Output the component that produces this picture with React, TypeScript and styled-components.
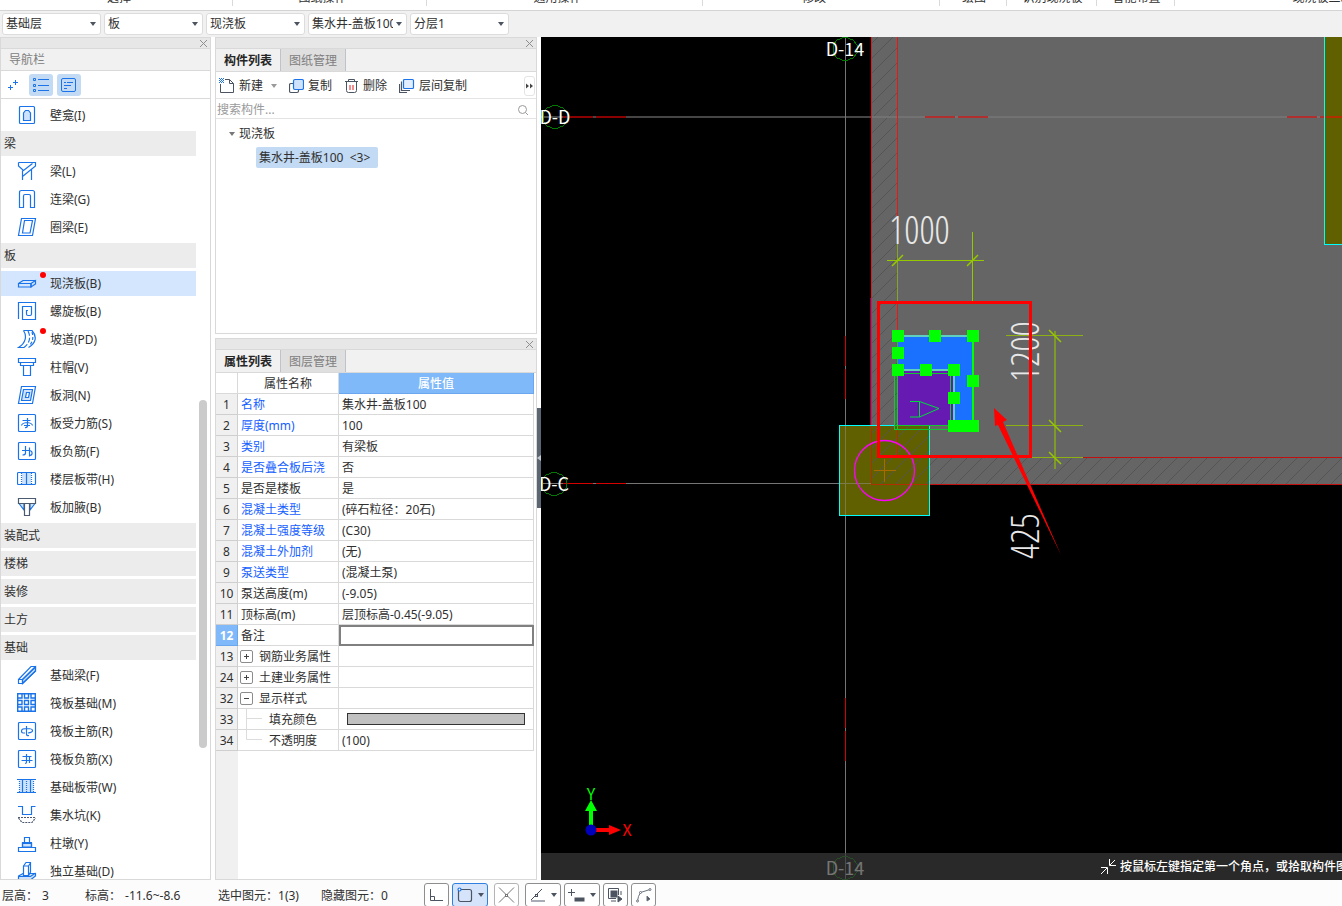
import React from "react";
import styled, { createGlobalStyle, css } from "styled-components";

const BLUE = "#1a73e8";
const PALE = "#cfe2fb";
const LINE = "#d9d9d9";

const Global = createGlobalStyle`
  * { box-sizing: border-box; }
  body {
    margin: 0;
    overflow: hidden;
    background: #fff;
    color: #303030;
    font: 12px/16px "Noto Sans", "Noto Sans CJK SC", sans-serif;
  }
  button, input, select {
    font: inherit;
    color: inherit;
    margin: 0;
    padding: 0;
    border: 0;
    background: none;
  }
  svg { display: block; flex: none; }
`;

const Page = styled.div`
  display: flex;
  flex-direction: column;
  height: 100vh;
`;

/* ---------- ribbon captions ---------- */
const Ribbon = styled.header`
  display: grid;
  grid-template-columns: 233px 194px 276px 237px 67px 90px 78px minmax(320px, 1fr);
  height: 11px;
  flex: none;
  overflow: hidden;
  border-bottom: 1px solid #d4d4d4;
`;

const RibbonGroup = styled.div<{ $lead?: number; $trail?: number }>`
  display: flex;
  justify-content: center;
  align-items: flex-end;
  height: 6px;
  padding: 0 ${(p) => p.$trail ?? 0}px 0 ${(p) => p.$lead ?? 0}px;
  border-right: 1px solid ${LINE};
  white-space: nowrap;
`;

/* ---------- selector bar ---------- */
const SelectorBar = styled.div`
  display: flex;
  gap: 3px;
  flex: none;
  height: 26px;
  padding: 2px;
  background: #f1f1f1;
`;

const SelectBox = styled.div`
  position: relative;
  width: 99px;
  height: 22px;
`;

const Select = styled.select`
  appearance: none;
  width: 100%;
  height: 100%;
  padding: 0 13px 0 3px;
  border: 1px solid #dcdcdc;
  border-radius: 3px;
  background: #fff;
  overflow: hidden;
`;

const Caret = styled.i<{ $over?: boolean; $color?: string }>`
  border: 3px solid transparent;
  border-top: 4px solid ${(p) => p.$color ?? "#4c5461"};
  border-bottom: 0;
  ${(p) =>
    p.$over &&
    css`
      position: absolute;
      right: 5px;
      top: 9px;
      pointer-events: none;
    `}
`;

/* ---------- main area ---------- */
const Main = styled.main`
  display: grid;
  grid-template-columns: 211px 322px minmax(0, 1fr);
  column-gap: 4px;
  flex: 1;
  min-height: 0;
`;

const Panel = styled.section`
  display: flex;
  flex-direction: column;
  min-height: 0;
  border: 1px solid ${LINE};
  background: #fff;
`;

const Grip = styled.div`
  display: flex;
  justify-content: flex-end;
  align-items: center;
  flex: none;
  height: 11px;
  padding-right: 2px;
  background: #e7e7e7;
  border-bottom: 1px solid ${LINE};
`;

const PanelTitle = styled.h2`
  flex: none;
  height: 22px;
  margin: 0;
  padding: 2px 8px;
  font-size: 12px;
  line-height: 18px;
  font-weight: 400;
  color: #808080;
  background: #f1f1f1;
  border-bottom: 1px solid ${LINE};
`;

const NavTools = styled.div`
  display: flex;
  align-items: center;
  gap: 4px;
  flex: none;
  height: 28px;
  border-bottom: 1px solid ${LINE};
`;

const NavTool = styled.button<{ $on?: boolean }>`
  display: grid;
  place-items: center;
  width: 24px;
  height: 22px;
  border-radius: 3px;
  background: ${(p) => (p.$on ? "#c2daf4" : "transparent")};
`;

const NavBody = styled.div`
  display: grid;
  grid-template-columns: minmax(0, 1fr) 8px;
  column-gap: 3px;
  flex: 1;
  min-height: 0;
  padding-right: 3px;
`;

const NavList = styled.nav`
  display: flex;
  flex-direction: column;
  gap: 3px;
  overflow: hidden;
  padding-top: 4px;
`;

const NavGroup = styled.button`
  flex: none;
  height: 25px;
  padding-left: 3px;
  text-align: left;
  background: #ececec;
`;

const NavItem = styled.button<{ $on?: boolean }>`
  display: flex;
  align-items: center;
  gap: 13px;
  flex: none;
  height: 25px;
  padding-left: 16px;
  background: ${(p) => (p.$on ? "#d3e6fe" : "transparent")};
`;

const IconHolder = styled.span`
  position: relative;
`;

const Dot = styled.i`
  position: absolute;
  left: 23px;
  top: -1px;
  width: 6px;
  height: 6px;
  border-radius: 50%;
  background: #f00;
`;

const Track = styled.div`
  display: grid;
  grid-template-rows: 301fr 349fr 131fr;
`;

const Thumb = styled.div`
  grid-row: 2;
  border-radius: 4px;
  background: #cbcbcb;
`;

const Middle = styled.div`
  display: grid;
  grid-template-rows: 297px minmax(0, 1fr);
  row-gap: 4px;
  min-height: 0;
`;

const Tabs = styled.div`
  display: flex;
  flex: none;
  height: 23px;
  background: #f1f1f1;
  border-bottom: 1px solid ${LINE};
`;

const Tab = styled.button<{ $on?: boolean }>`
  width: 65px;
  padding-top: 1px;
  border-right: 1px solid #bfc3c9;
  font-weight: ${(p) => (p.$on ? 700 : 400)};
  color: ${(p) => (p.$on ? "#262626" : "#808080")};
  background: ${(p) => (p.$on ? "#f1f1f1" : "#dfdfdf")};
`;

const Commands = styled.div`
  display: flex;
  align-items: center;
  gap: 12px;
  flex: none;
  height: 27px;
  padding: 2px 0 0 3px;
  border-bottom: 1px solid #e4e4e4;
`;

const Command = styled.button`
  display: flex;
  align-items: center;
  gap: 4px;
  white-space: nowrap;
  ${Caret} { margin-left: 4px; }
`;

const More = styled.button`
  display: grid;
  place-items: center;
  width: 11px;
  height: 20px;
  margin: 0 1px 0 auto;
  border: 1px solid #e4e4e4;
  border-radius: 3px;
`;

const Search = styled.label`
  display: flex;
  align-items: center;
  flex: none;
  height: 20px;
  padding: 2px 7px 0 1px;
  border-bottom: 1px solid #e4e4e4;
`;

const SearchInput = styled.input`
  flex: 1;
  min-width: 0;
  outline: 0;
  &::placeholder { color: #9a9a9a; opacity: 1; }
`;

const Tree = styled.ul`
  margin: 0;
  padding: 4px 0 0 13px;
  list-style: none;
`;

const TreeNode = styled.li`
  display: flex;
  align-items: center;
  gap: 4px;
  height: 21px;
  margin-bottom: 3px;
`;

const TreeLeaf = styled.button`
  height: 21px;
  margin-left: 27px;
  padding: 0 8px 0 3px;
  border-radius: 2px;
  background: #c2daf4;
  white-space: pre;
`;

/* ---------- property table ---------- */
const TableArea = styled.div`
  flex: 1;
  min-height: 0;
  overflow: hidden;
  padding-right: 2px;
  background: linear-gradient(to right, #f0f0f0 22px, #fff 22px);
`;

const Table = styled.table`
  width: 100%;
  table-layout: fixed;
  border-collapse: separate;
  border-spacing: 0;
  background: #fff;
`;

const cell = css`
  height: 21px;
  padding: 2px 0 0;
  border-right: 1px solid #d9d9d9;
  border-bottom: 1px solid #d9d9d9;
  font-weight: 400;
  line-height: 18px;
  white-space: nowrap;
`;

const Head = styled.th<{ $on?: boolean }>`
  ${cell}
  ${(p) =>
    p.$on &&
    css`
      color: #fff;
      font-weight: 500;
      background: #80b9f9;
      border-color: #6aa7ee;
    `}
`;

const Num = styled.th<{ $on?: boolean }>`
  ${cell}
  background: ${(p) => (p.$on ? "#80b9f9" : "#f0f0f0")};
  color: ${(p) => (p.$on ? "#fff" : "inherit")};
  font-weight: ${(p) => (p.$on ? 700 : 400)};
  border-color: ${(p) => (p.$on ? "#6aa7ee" : "#cfcfcf")};
`;

const Name = styled.td<{ $link?: boolean }>`
  ${cell}
  padding: 0;
  color: ${(p) => (p.$link ? "#1560ff" : "inherit")};
`;

const NameLine = styled.div<{ $tree?: boolean }>`
  display: flex;
  align-items: center;
  gap: 6px;
  height: 20px;
  padding-left: ${(p) => (p.$tree ? "2px" : "3px")};
`;

const NameText = styled.span`
  padding-top: 2px;
`;

const Value = styled.td<{ $bare?: boolean }>`
  ${cell}
  padding: ${(p) => (p.$bare ? "0" : "2px")} 0 0 3px;
`;

const ValueEdit = styled.td`
  ${cell}
  padding: 0;
  border: 0;
`;

const NoteInput = styled.input`
  display: block;
  width: 100%;
  height: 21px;
  padding: 0 2px;
  border: 2px solid #808080;
  background: #fff;
  outline: 0;
`;

const Expander = styled.button`
  display: grid;
  place-items: center;
  width: 13px;
  height: 13px;
  border: 1px solid #8c8c8c;
  border-radius: 2px;
  background: #fff;
`;

const Swatch = styled.button`
  display: block;
  width: 178px;
  height: 12px;
  margin-left: 5px;
  border: 1px solid #333;
  background: #c0c0c0;
`;

/* ---------- drawing area ---------- */
const Stage = styled.section`
  position: relative;
  display: flex;
  flex-direction: column;
  justify-content: flex-end;
  min-height: 0;
  background: #000;
`;

const Drawing = styled.svg`
  position: absolute;
  inset: 0;
  width: 100%;
  height: 100%;
`;

const SplitHandle = styled.button`
  position: absolute;
  left: -4px;
  top: 44%;
  display: grid;
  place-items: center;
  width: 4px;
  height: 100px;
  background: #5b6672;
`;

const HintBar = styled.div`
  position: relative;
  display: flex;
  justify-content: flex-end;
  height: 27px;
  background: rgba(58, 58, 58, 0.7);
`;

const Hint = styled.p`
  display: flex;
  align-items: center;
  gap: 4px;
  width: 242px;
  margin: 0;
  overflow: hidden;
  color: #fff;
  font-weight: 500;
  white-space: nowrap;
`;

/* ---------- status bar ---------- */
const Status = styled.footer`
  display: flex;
  flex: none;
  height: 26px;
  overflow: hidden;
  background: #fcfcfc;
`;

const Facts = styled.dl`
  display: grid;
  grid-template-columns: 83px 133px 103px 103px;
  margin: 0;
  padding: 8px 0 0 2px;
`;

const Fact = styled.div<{ $spaced?: boolean }>`
  display: flex;
  gap: ${(p) => (p.$spaced ? "4px" : "0")};
  white-space: nowrap;
  dd { margin: 0; }
`;

const Modes = styled.div`
  display: flex;
  gap: 3px;
  padding-top: 3px;
`;

const Mode = styled.button<{ $on?: boolean; $off?: boolean; $wide?: boolean }>`
  display: flex;
  align-items: center;
  justify-content: center;
  gap: 5px;
  width: ${(p) => (p.$wide ? "36px" : "25px")};
  height: 24px;
  margin: ${(p) => (p.$off ? "0 3px" : "0")};
  border: 1px solid ${(p) => (p.$on ? "#2f80e0" : p.$off ? "#b4b4b4" : "#8e8e8e")};
  border-radius: 3px;
  background: ${(p) => (p.$on ? "#d5e4fb" : "#fff")};
`;

/* ---------- icons ---------- */
const CloseX = () => (
  <svg width="9" height="9" viewBox="0 0 9 9" stroke="#8f8f8f" fill="none">
    <path d="M1 1L8 8M8 1L1 8" />
  </svg>
);

const frame = <rect x="1.5" y="1.5" width="17" height="17" rx="1" />;

const shapes: Record<string, React.ReactNode> = {
  niche: (
    <>
      <rect x="2.5" y="1.5" width="15" height="17" rx="1" />
      <path d="M6.5 15.5V8L8.5 5.5H11.5L13.5 8V15.5z" fill={PALE} />
    </>
  ),
  beam: <path d="M1.5 1.5H18.5V5L5.5 15.5M1.5 1.5V5L6.5 9.5L15.5 2.5M5.5 9.5V19M14.5 8.5V19" />,
  link: <path d="M2.5 18.5V3.5Q2.5 1.5 4.5 1.5H15.5Q17.5 1.5 17.5 3.5V18.5H13.5V7Q13.5 5.5 12 5.5H8Q6.5 5.5 6.5 7V18.5z" />,
  ring: <path d="M4.5 1.5H18.5L15.5 18.5H1.5zM7.5 3.5H15.5L13 16H5.5z" />,
  slab: (
    <>
      <path d="M14 10.5L18.5 7.5V11L14 14z" fill={PALE} />
      <path d="M1.5 10.5L6 7.5H18.5M1.5 10.5H14V14H1.5z" />
    </>
  ),
  spiral: <path d="M1.5 18V1.5H18.5V18.5H5.5V5.5H14.5V13Q14.5 14.5 13 14.5H11Q9.5 14.5 9.5 13V9.5H11" />,
  ramp: (
    <>
      <path d="M6.5 1.5H15C20 7 19.5 14 11.5 18.5M6.5 1.5C10 7 9 14 1.5 18.5H7" />
      <path d="M11 2C14 8 13 14 7 18.5" strokeDasharray="5 2" />
      <path d="M15 3C16.500 8 16 12 13 16" strokeDasharray="3 2" />
    </>
  ),
  cap: <path d="M1.5 1.5H18.5V5.5H1.5zM3.5 5.5V8.5H16.5V5.5M6.5 8.5V18.5H13.5V8.5" />,
  hole: (
    <>
      <path d="M4.5 1.5H18.5L15.5 18.5H1.5z" />
      <path d="M6.5 4.5H15.5L13.5 15.5H4.5z" fill={PALE} />
      <path d="M9.5 7.5H12.5L11.5 12.5H8.5z" fill="#fff" />
    </>
  ),
  barS: (
    <>
      {frame}
      <path d="M5.5 7.5H13.5M4.5 12.5Q5 10 10 9.5Q15 10 15.5 12.5M10.500 5V13Q10 15 8 14.5M7 12.5H13" />
    </>
  ),
  barF: (
    <>
      {frame}
      <path d="M5 9.500H12.5Q15.5 10 15 13Q14.500 14.500 12.500 14.500M8.5 5V12Q8.5 14 5.5 14M12.5 6.5V15.500" />
    </>
  ),
  stripH: (
    <>
      <rect x="5" y="3.5" width="9" height="12" fill={PALE} stroke="none" />
      <rect x="0.5" y="3.5" width="18" height="12" rx="1" />
      <path d="M9.5 3.5V15.5" />
      <path d="M4.5 4V15M14.5 4V15" strokeDasharray="1 1" />
    </>
  ),
  haunch: (
    <>
      <path d="M2 6.5L7 13V6.5zM18 6.5L13 13V6.5z" fill={PALE} />
      <path d="M1.5 1.5H18.5V6.5H1.5zM7.5 6.5V18.5H12.5V6.5" stroke="#4c5a70" />
    </>
  ),
  fbeam: (
    <>
      <path d="M5.5 14.5L18.5 2V6L5.5 18.5z" fill={PALE} />
      <path d="M1.5 14.5H5.5V18.5H1.5zM1.5 14.5L14 1.5H18.5V6L5.5 18.5M5.5 14.5L18.5 1.5" />
    </>
  ),
  raft: (
    <g strokeWidth="1.4">
      <path d="M0.700 0.700H18.300V18.300H0.700z" />
      <path d="M0.700 5H5V0.700M7.500 0.700V5H11.500V0.700M14 0.700V5H18.300M0.700 7.500H5V11.500H0.700M7.500 7.500H11.500V11.500H7.500zM18.300 7.500H14V11.500H18.300M0.700 14H5V18.300M7.500 18.300V14H11.500V18.300M14 18.300V14H18.300" />
    </g>
  ),
  barR: (
    <>
      {frame}
      <path d="M8 12H6Q4.500 12 4.500 10Q4.500 7.500 10 7.500Q15.500 7.500 15.500 9.500Q15.500 11.500 11 12M9.500 5V13Q9.500 15 12 14.500" />
    </>
  ),
  barX: (
    <>
      {frame}
      <path d="M5.5 7.5H14.5M4.5 11.5H15.5M9.5 5V13Q9.5 14.500 8 14.500M12.5 7.5V14" />
    </>
  ),
  stripW: (
    <>
      <rect x="2.5" y="3" width="14" height="12" fill={PALE} stroke="none" />
      <path d="M0 2.5H19M0 15.5H19M5.5 3V15M13.5 3V15" />
      <path d="M2.5 4V15M9.5 4V15M16.5 4V15" strokeDasharray="1 1" />
    </>
  ),
  sump: (
    <>
      <path d="M1 1.5H5.5V9.5H14.5V1.5H18.5" />
      <path d="M1 12.5H19M1.5 13L5 17.5H15L18.5 13" stroke="#4c5a70" strokeDasharray="2 1" />
    </>
  ),
  pier: (
    <>
      <path d="M5.5 10.5H14.5V14H5.5z" fill={PALE} />
      <path d="M7.5 9.5V4.5H12.5V9.500M5.5 14V9.5H14.5V14M1.5 14.5H18.5V18.5H1.5z" />
    </>
  ),
  single: (
    <>
      <path d="M1.5 15L6 12.5H18.5V15L14 18.5H1.5z" fill={PALE} />
      <path d="M6.500 5L9 1.500H13.500V11L11.500 14.500H6.500z" fill="#fff" />
      <path d="M1.5 15.5H13.5L18.5 12M6.5 5H11.5V14.5M11.5 5L13.5 2" />
    </>
  ),
};

const NavIcon = ({ name }: { name: string }) => (
  <svg width="20" height="21" viewBox="0 0 20 21" fill="none" stroke={BLUE} strokeWidth="1.2">
    {shapes[name]}
  </svg>
);

type Entry = { text: string; icon?: string; dot?: boolean; on?: boolean };

const entries: Entry[] = [
  { text: "壁龛(I)", icon: "niche" },
  { text: "梁" },
  { text: "梁(L)", icon: "beam" },
  { text: "连梁(G)", icon: "link" },
  { text: "圈梁(E)", icon: "ring" },
  { text: "板" },
  { text: "现浇板(B)", icon: "slab", dot: true, on: true },
  { text: "螺旋板(B)", icon: "spiral" },
  { text: "坡道(PD)", icon: "ramp", dot: true },
  { text: "柱帽(V)", icon: "cap" },
  { text: "板洞(N)", icon: "hole" },
  { text: "板受力筋(S)", icon: "barS" },
  { text: "板负筋(F)", icon: "barF" },
  { text: "楼层板带(H)", icon: "stripH" },
  { text: "板加腋(B)", icon: "haunch" },
  { text: "装配式" },
  { text: "楼梯" },
  { text: "装修" },
  { text: "土方" },
  { text: "基础" },
  { text: "基础梁(F)", icon: "fbeam" },
  { text: "筏板基础(M)", icon: "raft" },
  { text: "筏板主筋(R)", icon: "barR" },
  { text: "筏板负筋(X)", icon: "barX" },
  { text: "基础板带(W)", icon: "stripW" },
  { text: "集水坑(K)", icon: "sump" },
  { text: "柱墩(Y)", icon: "pier" },
  { text: "独立基础(D)", icon: "single" },
];

type Row = {
  n: number;
  name: string;
  value?: string;
  link?: boolean;
  kind?: "open" | "closed" | "child" | "last" | "note";
  swatch?: boolean;
};

const rows: Row[] = [
  { n: 1, name: "名称", value: "集水井-盖板100", link: true },
  { n: 2, name: "厚度(mm)", value: "100", link: true },
  { n: 3, name: "类别", value: "有梁板", link: true },
  { n: 4, name: "是否叠合板后浇", value: "否", link: true },
  { n: 5, name: "是否是楼板", value: "是" },
  { n: 6, name: "混凝土类型", value: "(碎石粒径：20石)", link: true },
  { n: 7, name: "混凝土强度等级", value: "(C30)", link: true },
  { n: 8, name: "混凝土外加剂", value: "(无)", link: true },
  { n: 9, name: "泵送类型", value: "(混凝土泵)", link: true },
  { n: 10, name: "泵送高度(m)", value: "(-9.05)" },
  { n: 11, name: "顶标高(m)", value: "层顶标高-0.45(-9.05)" },
  { n: 12, name: "备注", kind: "note" },
  { n: 13, name: "钢筋业务属性", kind: "closed" },
  { n: 24, name: "土建业务属性", kind: "closed" },
  { n: 32, name: "显示样式", kind: "open" },
  { n: 33, name: "填充颜色", kind: "child", swatch: true },
  { n: 34, name: "不透明度", kind: "last", value: "(100)" },
];

const PropertyName = ({ row }: { row: Row }) => {
  const branch = row.kind === "open" || row.kind === "closed";
  const leaf = row.kind === "child" || row.kind === "last";
  return (
    <NameLine $tree={branch || leaf}>
      {branch && (
        <Expander aria-label={row.name}>
          <svg width="7" height="7" viewBox="0 0 7 7" stroke="#444">
            <path d={row.kind === "open" ? "M1 3.5H6" : "M1 3.5H6M3.5 1V6"} />
          </svg>
        </Expander>
      )}
      {leaf && (
        <svg width="23" height="20" viewBox="0 0 23 20" fill="none" stroke="#dcdcdc">
          <path d={row.kind === "child" ? "M6.5 0V20M6.5 9.5H22" : "M6.5 0V9.5H22"} />
        </svg>
      )}
      <NameText>{row.name}</NameText>
    </NameLine>
  );
};

const Bubble = ({ x, y, label }: { x: number; y: number; label: string }) => (
  <g>
    <polygon
      points="0,-12 8,-9 12,-4 12,4 8,9 0,12 -8,9 -12,4 -12,-4 -8,-9"
      transform={`translate(${x} ${y})`}
      fill="none"
      stroke="#007a00"
    />
    <text x={x} y={y + 7} textAnchor="middle" fill="#fff" fontSize="18" fontFamily='"Noto Sans CJK SC", sans-serif'>
      {label}
    </text>
  </g>
);

const grips = [
  [898, 336], [935, 336], [973, 336], [898, 353], [898, 370],
  [926, 370], [954, 370], [973, 381], [954, 398],
];

const Plan = () => (
  <Drawing aria-label="平面图">
    <defs>
      <pattern id="hatch" width="15" height="15" patternUnits="userSpaceOnUse">
        <path d="M-1 16L16 -1" stroke="#555" />
      </pattern>
    </defs>
    <g transform="translate(-541 -37)" shapeRendering="crispEdges" fill="none">
      <path d="M541 117H4000" stroke="#454545" strokeWidth="2" />
      <path d="M541 483.5H4000M845.5 37V4000" stroke="#757575" />
      <rect x="871" y="37" width="4000" height="447" fill="#656565" />
      <path d="M871 37H898V458H4000V484H871z" fill="url(#hatch)" />
      <path d="M871 117H4000" stroke="#727272" strokeWidth="2" />
      <path d="M563 117H593M596 117H626" stroke="#8b0000" strokeWidth="2" />
      <path d="M925 117H955M958 117H988M1287 117H1317M1320 117H1350" stroke="#b03030" strokeWidth="2" />
      <path d="M563 483.5H593M596 483.5H626M845.5 336V366M845.5 369V399M845.5 698V728M845.5 731V761" stroke="#d40000" />
      <path d="M871.5 37V484M897.5 37V458" stroke="#f01414" />
      <path d="M871 484.5H4000M1083 457.5H4000" stroke="#c01010" />
      <path d="M870.5 298V425.5H860" stroke="#4a1a86" />

      <rect x="1324.5" y="20" width="90" height="224" fill="#606000" stroke="#00ffff" />
      <path d="M1325 117H1415" stroke="#b03000" strokeWidth="2" />

      <rect x="839.5" y="425.5" width="90" height="90" fill="#606000" />
      <path d="M871 426H929V484H871z" fill="url(#hatch)" />
      <path d="M840 483.5H871M845.5 426V515" stroke="#7a7a4a" />
      <path d="M871.5 426V484.5H929M897.5 426V458" stroke="#b03000" />
      <path d="M874 470.5H896M884.5 459V482" stroke="#a86a00" />
      <rect x="839.5" y="425.5" width="90" height="90" stroke="#00ffff" />
      <circle cx="884.5" cy="470.5" r="30" stroke="#ff00ff" strokeWidth="1.3" shapeRendering="auto" />

      <path d="M887 260.5H984M972.5 232V301" stroke="#96c800" />
      <path d="M897.5 232V301" stroke="#86a428" />
      <path d="M892 266L903 255M967 266L978 255" stroke="#96c800" strokeWidth="1.5" shapeRendering="auto" />
      <path d="M1055 331V469" stroke="#7f9a28" strokeWidth="2" />
      <path d="M1006 335.5H1083M1006 425.5H1083M1031 457.5H1083" stroke="#8cb014" />
      <path d="M1049 330L1061 342M1049 420L1061 432M1049 452L1061 464" stroke="#96c800" strokeWidth="1.5" shapeRendering="auto" />

      <rect x="898" y="336" width="74" height="90" fill="#1a70ff" />
      <rect x="898" y="371" width="55" height="54" fill="#661ab2" />
      <path d="M898 336H973M898 370H954V425" stroke="#5fd0c0" strokeWidth="2" />
      <path d="M973 336V426" stroke="#00ff00" strokeWidth="2" />
      <path d="M894.5 370V429.5H950M897.5 336V429M897 373.5H950.5V425.5H894" stroke="#12c832" />
      <path d="M910 401.5H919.5V417H910M919.5 401.5L939 408.5L919.5 417" stroke="#00dc3c" shapeRendering="auto" />
      {grips.map(([x, y]) => (
        <rect key={`${x}-${y}`} x={x - 6} y={y - 6} width="12" height="12" fill="#00ff00" />
      ))}
      <rect x="948" y="420" width="31" height="12" fill="#00ff00" />

      <g
        fill="#e8e8e8"
        fontSize="38"
        fontWeight="300"
        fontFamily='"Open Sans Condensed Light", "Open Sans Condensed", "Roboto Condensed", "Liberation Sans Narrow", sans-serif'
      >
        <text x="889" y="244">1000</text>
        <text transform="translate(1039 382) rotate(-90)">1200</text>
        <text transform="translate(1039 559) rotate(-90)">425</text>
      </g>

      <Bubble x={845} y={49} label="D-14" />
      <Bubble x={555} y={117} label="D-D" />
      <Bubble x={554} y={484} label="D-C" />
      <Bubble x={845} y={868} label="D-14" />

      <rect x="878.5" y="302.5" width="152" height="154" stroke="#f00" strokeWidth="3" />
      <path d="M994 408L1007 420L1003 422L1061 555L998 425L995 426z" fill="#f00" shapeRendering="auto" />

      <g shapeRendering="auto" fontSize="16" fontFamily='"Noto Sans CJK SC", sans-serif' textAnchor="middle">
        <path d="M589 826V811H585L591 800L597 811H593V826z" fill="#0f0" />
        <path d="M595 828H609V825L621 830L609 835V832H595z" fill="#f00" />
        <circle cx="591" cy="830" r="5.5" fill="#00b" />
        <text x="591" y="800" fill="#0f0">Y</text>
        <text x="627" y="836" fill="#f00">X</text>
      </g>
    </g>
  </Drawing>
);

const ribbon = [
  { label: "选择", lead: 6 },
  { label: "图纸操作", trail: 14 },
  { label: "通用操作", trail: 14 },
  { label: "修改", trail: 14 },
  { label: "绘图", lead: 2 },
  { label: "识别现浇板", lead: 2 },
  { label: "智能布置", lead: 2 },
  { label: "现浇板二次编辑" },
];

const selectors = [
  ["楼层", "基础层"], ["构件分类", "板"], ["构件类型", "现浇板"], ["构件", "集水井-盖板100"], ["分层", "分层1"],
];

export default function App() {
  return (
    <Page>
      <Global />
      <Ribbon>
        {ribbon.map((g) => (
          <RibbonGroup key={g.label} $lead={g.lead} $trail={g.trail}>{g.label}</RibbonGroup>
        ))}
      </Ribbon>
      <SelectorBar>
        {selectors.map(([label, value]) => (
          <SelectBox key={label}>
            <Select aria-label={label} defaultValue={value}>
              <option>{value}</option>
            </Select>
            <Caret $over />
          </SelectBox>
        ))}
      </SelectorBar>

      <Main>
        <Panel>
          <Grip><CloseX /></Grip>
          <PanelTitle>导航栏</PanelTitle>
          <NavTools>
            <NavTool aria-label="添加">
              <svg width="12" height="14" viewBox="0 0 12 14" stroke={BLUE} fill="none">
                <path d="M1 9.5H6M3.5 7V12M6 4.5H11M8.5 2V7" />
              </svg>
            </NavTool>
            <NavTool $on aria-label="列表">
              <svg width="16" height="16" viewBox="0 0 16 16" stroke={BLUE} fill="none">
                <path d="M5 2.5H16M5 8.5H16M5 13.5H16M0.5 1.5H2.5V3.5H0.5zM0.5 7.5H2.5V9.5H0.5zM0.5 12.5H2.5V14.5H0.5z" />
              </svg>
            </NavTool>
            <NavTool $on aria-label="详情">
              <svg width="16" height="16" viewBox="0 0 16 16" stroke={BLUE} fill="none">
                <rect x="0.5" y="1.5" width="14" height="13" rx="1.5" />
                <path d="M3 5.5H5M6 5.5H12M3 8.5H10M3 11.5H6" />
              </svg>
            </NavTool>
          </NavTools>
          <NavBody>
            <NavList>
              {entries.map((e) =>
                e.icon ? (
                  <NavItem key={e.text} $on={e.on}>
                    <IconHolder>
                      <NavIcon name={e.icon} />
                      {e.dot && <Dot />}
                    </IconHolder>
                    {e.text}
                  </NavItem>
                ) : (
                  <NavGroup key={e.text}>{e.text}</NavGroup>
                )
              )}
            </NavList>
            <Track><Thumb /></Track>
          </NavBody>
        </Panel>

        <Middle>
          <Panel>
            <Grip><CloseX /></Grip>
            <Tabs>
              <Tab $on>构件列表</Tab>
              <Tab>图纸管理</Tab>
            </Tabs>
            <Commands>
              <Command>
                <svg width="16" height="16" viewBox="0 0 16 16" fill="none" stroke="#4c5461">
                  <path d="M6 1.5H10.5L14.5 5.5V14.5H1.5V6M10.5 1.5V5.5H14.5" />
                  <path d="M0 0.5H5M0 2.5H5M0 4.5H5M1 1.5H5M1 3.5H5" stroke={BLUE} strokeDasharray="1 1" />
                </svg>
                新建
                <Caret $color="#9a9a9a" />
              </Command>
              <Command>
                <svg width="15" height="16" viewBox="0 0 15 16" strokeWidth="1.2">
                  <rect x="0.5" y="5.5" width="9" height="9" rx="1.5" fill="#fff" stroke="#4c5461" />
                  <rect x="4.5" y="1.5" width="10" height="10" rx="1.5" fill={PALE} stroke={BLUE} />
                </svg>
                复制
              </Command>
              <Command>
                <svg width="15" height="16" viewBox="0 0 15 16" fill="none" stroke="#4c5461">
                  <path d="M1 3.5H14M4.5 3.5V1.5H10.5V3.5M2.5 3.5V12.5Q2.5 14.5 4.5 14.5H10.5Q12.5 14.5 12.5 12.5V3.5" />
                  <path d="M6 7V12M9 7V12" stroke="#e02020" />
                </svg>
                删除
              </Command>
              <Command>
                <svg width="16" height="16" viewBox="0 0 16 16" fill="none" strokeWidth="1.2">
                  <path d="M2.5 3.5V12.5H11M0.5 6V14.5H8" stroke="#4c5461" />
                  <rect x="4.5" y="1.5" width="10" height="9" rx="1" fill="#e2eefd" stroke={BLUE} />
                </svg>
                层间复制
              </Command>
              <More aria-label="更多">
                <svg width="7" height="6" viewBox="0 0 7 6" fill="#444">
                  <path d="M0 0.5L3 3L0 5.5zM4 0.5L7 3L4 5.5z" />
                </svg>
              </More>
            </Commands>
            <Search>
              <SearchInput aria-label="搜索构件" placeholder="搜索构件..." />
              <svg width="12" height="12" viewBox="0 0 12 12" fill="none" stroke="#9a9a9a">
                <circle cx="5.5" cy="5.5" r="4" />
                <path d="M8.5 8.5L11 11" />
              </svg>
            </Search>
            <Tree>
              <TreeNode><Caret $color="#777" />现浇板</TreeNode>
              <TreeNode><TreeLeaf>集水井-盖板100  &lt;3&gt;</TreeLeaf></TreeNode>
            </Tree>
          </Panel>

          <Panel>
            <Grip><CloseX /></Grip>
            <Tabs>
              <Tab $on>属性列表</Tab>
              <Tab>图层管理</Tab>
            </Tabs>
            <TableArea>
              <Table>
                <colgroup>
                  <col style={{ width: 22 }} />
                  <col style={{ width: 101 }} />
                  <col />
                </colgroup>
                <thead>
                  <tr>
                    <Head />
                    <Head scope="col">属性名称</Head>
                    <Head scope="col" $on>属性值</Head>
                  </tr>
                </thead>
                <tbody>
                  {rows.map((r) => (
                    <tr key={r.n}>
                      <Num scope="row" $on={r.kind === "note"}>{r.n}</Num>
                      <Name $link={r.link}><PropertyName row={r} /></Name>
                      {r.kind === "note" ? (
                        <ValueEdit><NoteInput aria-label={r.name} /></ValueEdit>
                      ) : (
                        <Value $bare={r.swatch}>{r.swatch ? <Swatch aria-label={r.name} /> : r.value}</Value>
                      )}
                    </tr>
                  ))}
                </tbody>
              </Table>
            </TableArea>
          </Panel>
        </Middle>

        <Stage>
          <Plan />
          <SplitHandle aria-label="折叠面板">
            <svg width="4" height="6" viewBox="0 0 4 6" fill="#c4cad0"><path d="M4 0V6L0 3z" /></svg>
          </SplitHandle>
          <HintBar>
            <Hint>
              <svg width="16" height="16" viewBox="0 0 16 16" fill="none" stroke="#fff">
                <path d="M1 8.5H7.5V15M1 15L7 9M9.5 0V6.5H16M15 1L10 6" />
              </svg>
              按鼠标左键指定第一个角点，或拾取构件图元
            </Hint>
          </HintBar>
        </Stage>
      </Main>

      <Status>
        <Facts>
          <Fact $spaced><dt>层高：</dt><dd>3</dd></Fact>
          <Fact $spaced><dt>标高：</dt><dd>-11.6~-8.6</dd></Fact>
          <Fact><dt>选中图元：</dt><dd>1(3)</dd></Fact>
          <Fact><dt>隐藏图元：</dt><dd>0</dd></Fact>
        </Facts>
        <Modes>
          <Mode aria-label="正交">
            <svg width="15" height="14" viewBox="0 0 15 14" fill="none" stroke="#4c5461">
              <path d="M1.5 1V12.5H14M1.5 8.5H5.5V12.5" />
            </svg>
          </Mode>
          <Mode $wide $on aria-label="捕捉">
            <svg width="16" height="16" viewBox="0 0 16 16" fill="none" stroke="#4c5461" strokeWidth="1.2">
              <rect x="1.5" y="2.5" width="13" height="12" rx="2" />
              <circle cx="2.5" cy="2.5" r="1.5" fill="#fff" stroke={BLUE} />
            </svg>
            <Caret />
          </Mode>
          <Mode $off aria-label="交点" disabled>
            <svg width="17" height="16" viewBox="0 0 17 16" fill="#fff" stroke="#777">
              <path d="M1 0.5L16 15.5M16 0.5L1 15.5" />
              <rect x="7.5" y="7.5" width="2" height="2" />
            </svg>
          </Mode>
          <Mode $wide aria-label="角度">
            <svg width="16" height="16" viewBox="0 0 16 16" fill="#fff" stroke="#4c5461">
              <path d="M1 13L12 2" />
              <path d="M1 14H15" stroke="#a8adb5" strokeWidth="2" />
              <rect x="5.5" y="7.5" width="2" height="2" />
            </svg>
            <Caret />
          </Mode>
          <Mode $wide aria-label="偏移">
            <svg width="17" height="14" viewBox="0 0 17 14" stroke="#4c5461">
              <path d="M0 4.5H7M3.5 1V8" />
              <rect x="7" y="10" width="9" height="3" fill="#4c5461" />
            </svg>
            <Caret />
          </Mode>
          <Mode aria-label="叠加选择">
            <svg width="15" height="15" viewBox="0 0 15 15" fill="#4c5461" stroke="#4c5461">
              <rect x="3" y="3" width="6" height="6" />
              <path d="M0.5 0.5H10.5V7M0.5 0.5V10.5H8M3 13H8M13 3V7" fill="none" />
              <path d="M10 8V14L14 11z" />
            </svg>
          </Mode>
          <Mode aria-label="折线选择">
            <svg width="16" height="15" viewBox="0 0 16 15" fill="#fff" stroke="#6a727e">
              <path d="M1.5 13Q2 8 4.5 4.5L14 1.5" fill="none" />
              <circle cx="1.5" cy="13" r="1" /><circle cx="4.5" cy="4.5" r="1" /><circle cx="14" cy="1.5" r="1" />
              <path d="M11 8V13L14 11z" fill="#4c5461" />
            </svg>
          </Mode>
        </Modes>
      </Status>
    </Page>
  );
}
